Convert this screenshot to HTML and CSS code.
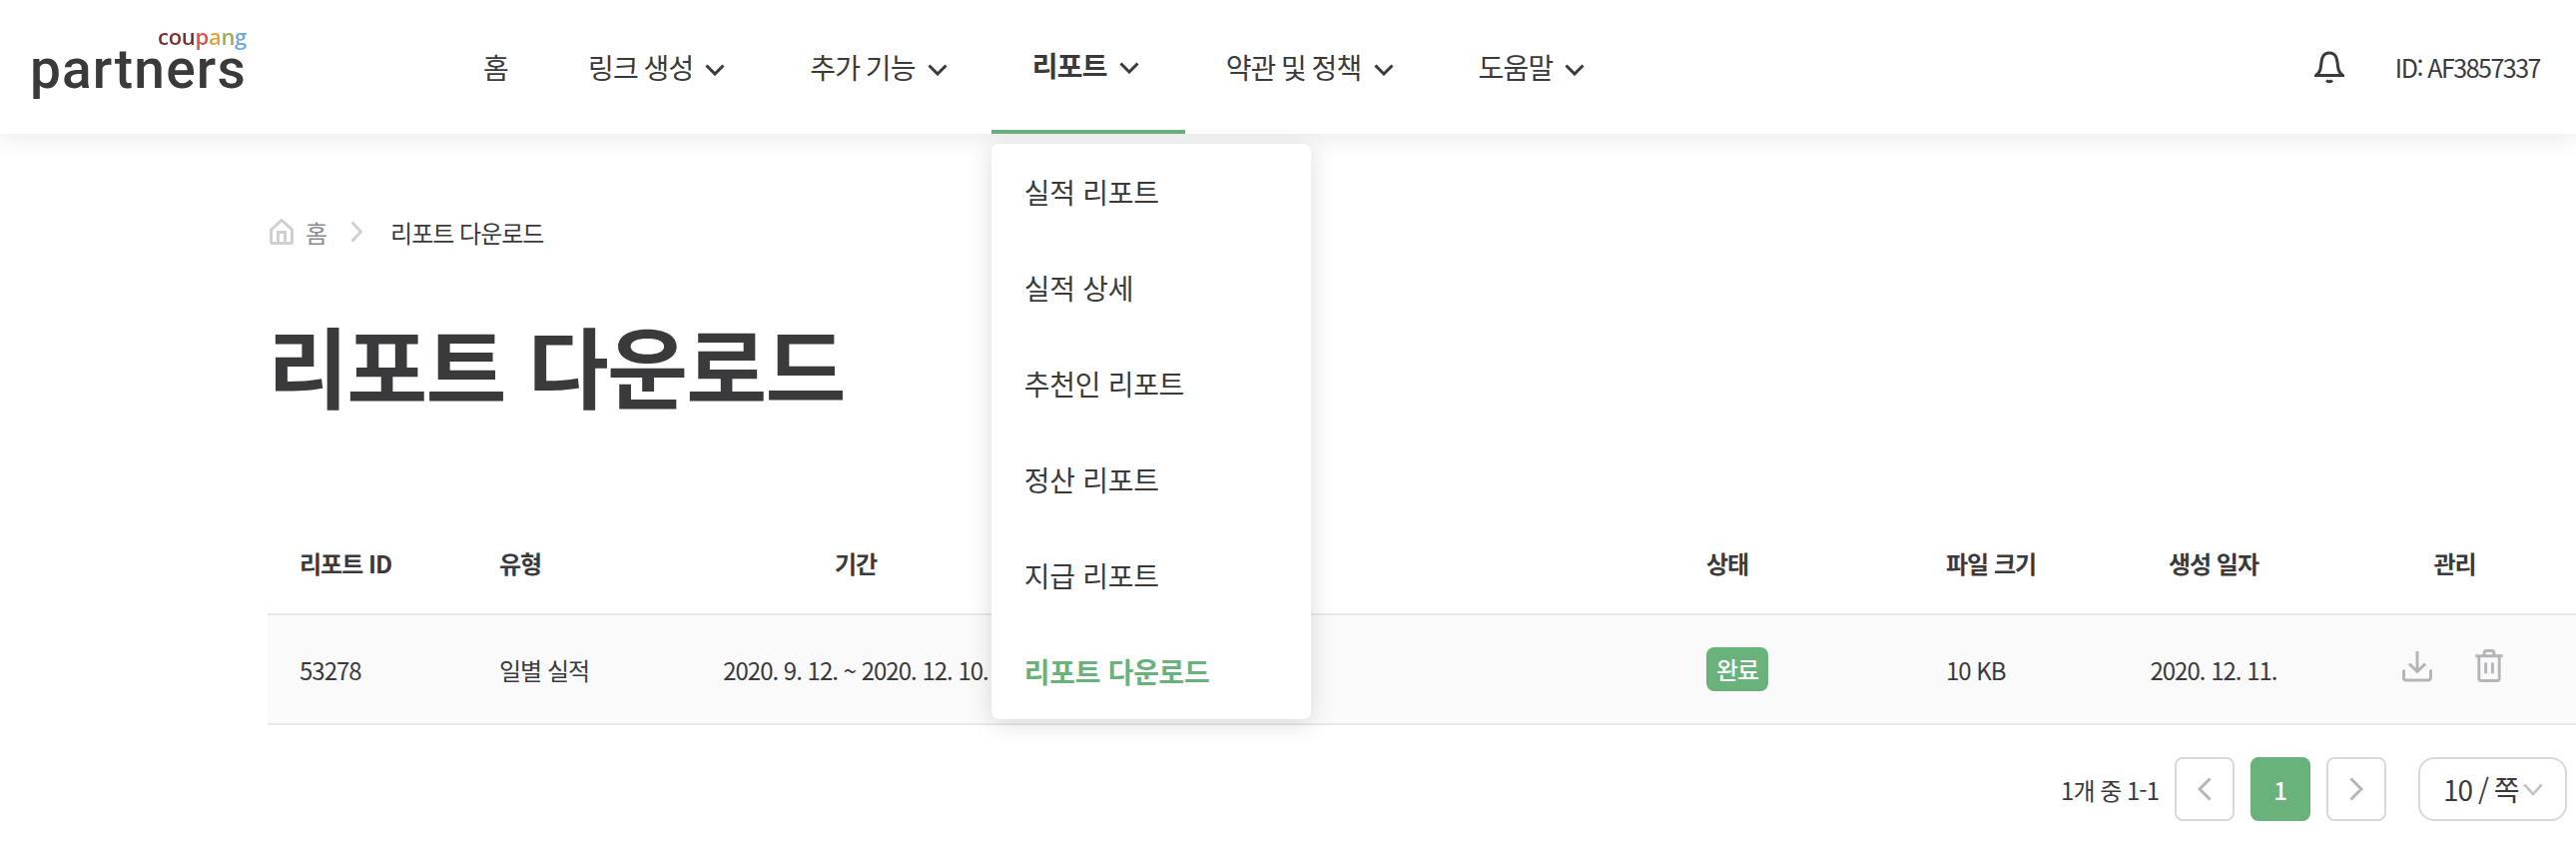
FILE: index.html
```html
<!DOCTYPE html>
<html lang="ko">
<head>
    <meta charset="UTF-8">
    <meta name="viewport" content="width=device-width, initial-scale=1.0">
    <title>리포트 다운로드</title>
    <link rel="stylesheet" href="styles.css">
</head>
<body>

    <header class="site-header">
        <a class="logo">
            <span class="logo-top"><span class="c1">cou</span><span class="c2">p</span><span class="c3">a</span><span class="c4">n</span><span class="c5">g</span></span>
            <span class="logo-main">partners</span>
        </a>

        <nav class="main-nav">
            <div class="nav-item nav-home">홈</div>
            <div class="nav-item">링크 생성
                <svg class="chev" viewBox="0 0 20 12"><path d="M1.5 1.5 10 10l8.5-8.5"/></svg>
            </div>
            <div class="nav-item">추가 기능
                <svg class="chev" viewBox="0 0 20 12"><path d="M1.5 1.5 10 10l8.5-8.5"/></svg>
            </div>
            <div class="nav-item active">리포트
                <svg class="chev" viewBox="0 0 20 12"><path d="M1.5 1.5 10 10l8.5-8.5"/></svg>
                <ul class="dropdown">
                    <li>실적 리포트</li>
                    <li>실적 상세</li>
                    <li>추천인 리포트</li>
                    <li>정산 리포트</li>
                    <li>지급 리포트</li>
                    <li class="current">리포트 다운로드</li>
                </ul>
            </div>
            <div class="nav-item">약관 및 정책
                <svg class="chev" viewBox="0 0 20 12"><path d="M1.5 1.5 10 10l8.5-8.5"/></svg>
            </div>
            <div class="nav-item">도움말
                <svg class="chev" viewBox="0 0 20 12"><path d="M1.5 1.5 10 10l8.5-8.5"/></svg>
            </div>
        </nav>

        <div class="user-area">
            <svg class="bell" viewBox="0 0 30 34"><path d="M1.5 25.5c3-2 4.500-4.500 5-9 .6-6 1-13.500 8.500-13.500s7.900 7.500 8.500 13.500c.5 4.500 2 7 5 9z"/><path d="M12 30.500c1.500 1.700 4.500 1.700 6 0"/></svg>
            <span class="user-id">ID: AF3857337</span>
        </div>
    </header>

    <main class="content">
        <div class="breadcrumb">
            <svg class="home-icon" viewBox="0 0 24 26"><path d="M1.500 11 12 1.500 22.500 11v12a1.500 1.500 0 0 1-1.500 1.500H3A1.500 1.500 0 0 1 1.500 23z"/><path d="M8.500 24.500V13.500h7v11"/></svg>
            <span class="crumb-home">홈</span>
            <svg class="crumb-sep" viewBox="0 0 12 22"><path d="M1.500 1.500 10.500 11l-9 9.500"/></svg>
            <span class="crumb-current">리포트 다운로드</span>
        </div>

        <h1>리포트 다운로드</h1>

        <table class="report-table">
            <colgroup>
                <col class="col-id">
                <col class="col-type">
                <col class="col-period">
                <col class="col-blank">
                <col class="col-status">
                <col class="col-size">
                <col class="col-date">
                <col class="col-manage">
            </colgroup>
            <thead>
                <tr>
                    <th>리포트 ID</th>
                    <th>유형</th>
                    <th class="center">기간</th>
                    <th></th>
                    <th>상태</th>
                    <th>파일 크기</th>
                    <th class="center">생성 일자</th>
                    <th class="center">관리</th>
                </tr>
            </thead>
            <tbody>
                <tr>
                    <td>53278</td>
                    <td>일별 실적</td>
                    <td class="center">2020. 9. 12. ~ 2020. 12. 10.</td>
                    <td></td>
                    <td><span class="badge">완료</span></td>
                    <td>10 KB</td>
                    <td class="center">2020. 12. 11.</td>
                    <td class="center">
                        <div class="actions">
                            <svg class="action-icon" viewBox="0 0 30 32"><path d="M15 1.500v20M7 14l8 8 8-8"/><path d="M1.500 20v8a2.500 2.500 0 0 0 2.500 2.500h22a2.500 2.500 0 0 0 2.500-2.500v-8"/></svg>
                            <svg class="action-icon" viewBox="0 0 30 34"><path d="M1 7h28M10 7V4a2.500 2.500 0 0 1 2.500-2.500h5A2.500 2.500 0 0 1 20 4v3"/><path d="M4.500 7v23a2.500 2.500 0 0 0 2.500 2.500h16a2.500 2.500 0 0 0 2.500-2.500V7"/><path d="M11.500 14v11M18.500 14v11"/></svg>
                        </div>
                    </td>
                </tr>
            </tbody>
        </table>

        <div class="pagination">
            <span class="page-count">1개 중 1-1</span>
            <button class="page-btn">
                <svg class="page-arrow" viewBox="0 0 14 24"><path d="M12.500 1.500 2 12l10.500 10.500"/></svg>
            </button>
            <button class="page-btn selected">1</button>
            <button class="page-btn">
                <svg class="page-arrow" viewBox="0 0 14 24"><path d="M1.500 1.500 12 12 1.500 22.500"/></svg>
            </button>
            <div class="page-size">10 / 쪽
                <svg class="size-chev" viewBox="0 0 22 14"><path d="M1.500 1.500 11 12l9.500-10.500"/></svg>
            </div>
        </div>
    </main>

</body>
</html>
```

FILE: styles.css
```css
* {
    box-sizing: border-box;
}

html, body {
    margin: 0;
    height: 854px;
    overflow: hidden;
}

body {
    font-family: "Noto Sans CJK KR", "Noto Sans", sans-serif;
    color: #3a3a3c;
    background-color: white;
}

.site-header {
    position: relative;
    z-index: 2;
    display: flex;
    align-items: center;
    height: 134px;
    padding-left: 28px;
    background-color: white;
    box-shadow: 0 4px 24px rgba(0, 0, 0, 0.09);
}

.logo {
    display: flex;
    flex-direction: column;
    align-items: flex-end;
    width: 219px;
    margin-top: -12px;
    font-family: Roboto, sans-serif;
    filter: blur(0.5px);
}

.logo-top {
    height: 22px;
    font-size: 22px;
    line-height: 22px;
    font-family: "Open Sans", sans-serif;
    font-weight: 600;
    letter-spacing: -0.3px;
}

.c1 { color: #7c3330; }
.c2 { color: #e0524f; }
.c3 { color: #e5a33f; }
.c4 { color: #9fae55; }
.c5 { color: #6fa9e2; }

.logo-main {
    margin-top: -6px;
    font-size: 55px;
    line-height: 56px;
    font-weight: 500;
    letter-spacing: 1.2px;
    color: #3a3a3a;
}

.main-nav {
    display: flex;
    margin-left: 196px;
    height: 134px;
}

.nav-item {
    position: relative;
    display: flex;
    align-items: center;
    gap: 12px;
    padding: 0 44px 0 41px;
    font-size: 28px;
    letter-spacing: -0.8px;
    word-spacing: -1.5px;
}

.nav-home {
    padding-right: 39px;
}

.chev {
    width: 20px;
    height: 12px;
    margin-top: 6px;
}

.chev path,
.bell path,
.home-icon path,
.crumb-sep path,
.action-icon path,
.page-arrow path,
.size-chev path {
    fill: none;
    stroke: currentColor;
    stroke-width: 3;
}

.nav-item.active {
    padding-right: 46px;
    font-weight: 700;
    border-bottom: 4px solid #6ab27b;
}

.dropdown {
    position: absolute;
    top: 144px;
    left: 0;
    width: 320px;
    margin: 0;
    padding: 0;
    list-style: none;
    font-weight: 400;
    letter-spacing: -0.3px;
    word-spacing: 0;
    background-color: white;
    border-radius: 8px;
    box-shadow: 0 4px 24px rgba(0, 0, 0, 0.14);
}

.dropdown li {
    height: 96px;
    line-height: 96px;
    padding-left: 33px;
}

.dropdown .current {
    font-weight: 700;
    color: #6ab27b;
}

.user-area {
    display: flex;
    align-items: center;
    margin-left: auto;
    padding-right: 36px;
}

.bell {
    width: 30px;
    height: 34px;
    margin-right: 51px;
}

.user-id {
    font-size: 25px;
    letter-spacing: -1.5px;
}

.content {
    padding-left: 268px;
}

.breadcrumb {
    display: flex;
    align-items: center;
    height: 36px;
    margin-top: 80px;
    font-size: 24px;
    letter-spacing: -1px;
}

.home-icon {
    width: 24px;
    height: 26px;
    margin-left: 2px;
    color: #d0d0d2;
}

.crumb-home {
    margin-left: 12px;
    color: #8a8a8e;
}

.crumb-sep {
    width: 12px;
    height: 22px;
    margin: 0 28px 0 24px;
    color: #d0d0d2;
}

h1 {
    height: 144px;
    margin: 42px 0 77px;
    font-size: 88px;
    line-height: 144px;
    font-weight: 700;
    letter-spacing: -1.7px;
}

.report-table {
    width: 2332px;
    table-layout: fixed;
    border-collapse: collapse;
    font-size: 24px;
    letter-spacing: -1px;
}

.col-id { width: 200px; }
.col-type { width: 232px; }
.col-period { width: 314px; }
.col-blank { width: 663px; }
.col-status { width: 240px; }
.col-size { width: 200px; }
.col-date { width: 200px; }
.col-manage { width: 283px; }

.report-table th,
.report-table td {
    padding: 0 32px;
    text-align: left;
    white-space: nowrap;
}

.report-table th {
    height: 102px;
    font-weight: 700;
    border-bottom: 2px solid #e8e8e8;
}

.report-table td {
    height: 110px;
    background-color: #fafafa;
    border-bottom: 2px solid #e8e8e8;
}

.report-table .center {
    padding: 0;
    text-align: center;
}

.badge {
    display: inline-block;
    padding: 0 10px;
    line-height: 44px;
    font-weight: 500;
    color: white;
    background-color: #6ab27b;
    border-radius: 8px;
}

.actions {
    display: flex;
    justify-content: center;
    align-items: center;
    gap: 42px;
    margin: 0 3px 8px 0;
    color: #b5b5b9;
}

.action-icon {
    width: 30px;
    height: 33px;
}

.pagination {
    display: flex;
    align-items: center;
    justify-content: flex-end;
    margin-top: 32px;
    padding-right: 9px;
}

.page-count {
    margin-right: 16px;
    font-size: 24px;
    letter-spacing: -1px;
}

.page-btn {
    display: flex;
    align-items: center;
    justify-content: center;
    width: 60px;
    height: 64px;
    margin-right: 16px;
    padding: 0;
    font-family: inherit;
    font-size: 24px;
    font-weight: 500;
    color: #b5b5b9;
    background-color: white;
    border: 2px solid #d9d9d9;
    border-radius: 8px;
}

.page-btn.selected {
    color: white;
    background-color: #6ab27b;
    border-color: #6ab27b;
}

.page-arrow {
    width: 14px;
    height: 24px;
}

.page-size {
    display: flex;
    align-items: center;
    gap: 4px;
    width: 149px;
    height: 64px;
    margin-left: 16px;
    padding-left: 23px;
    font-size: 28px;
    letter-spacing: -1px;
    word-spacing: -1px;
    white-space: nowrap;
    border: 2px solid #d9d9d9;
    border-radius: 16px;
}

.size-chev {
    width: 20px;
    height: 13px;
    color: #c4c4c6;
}
```
